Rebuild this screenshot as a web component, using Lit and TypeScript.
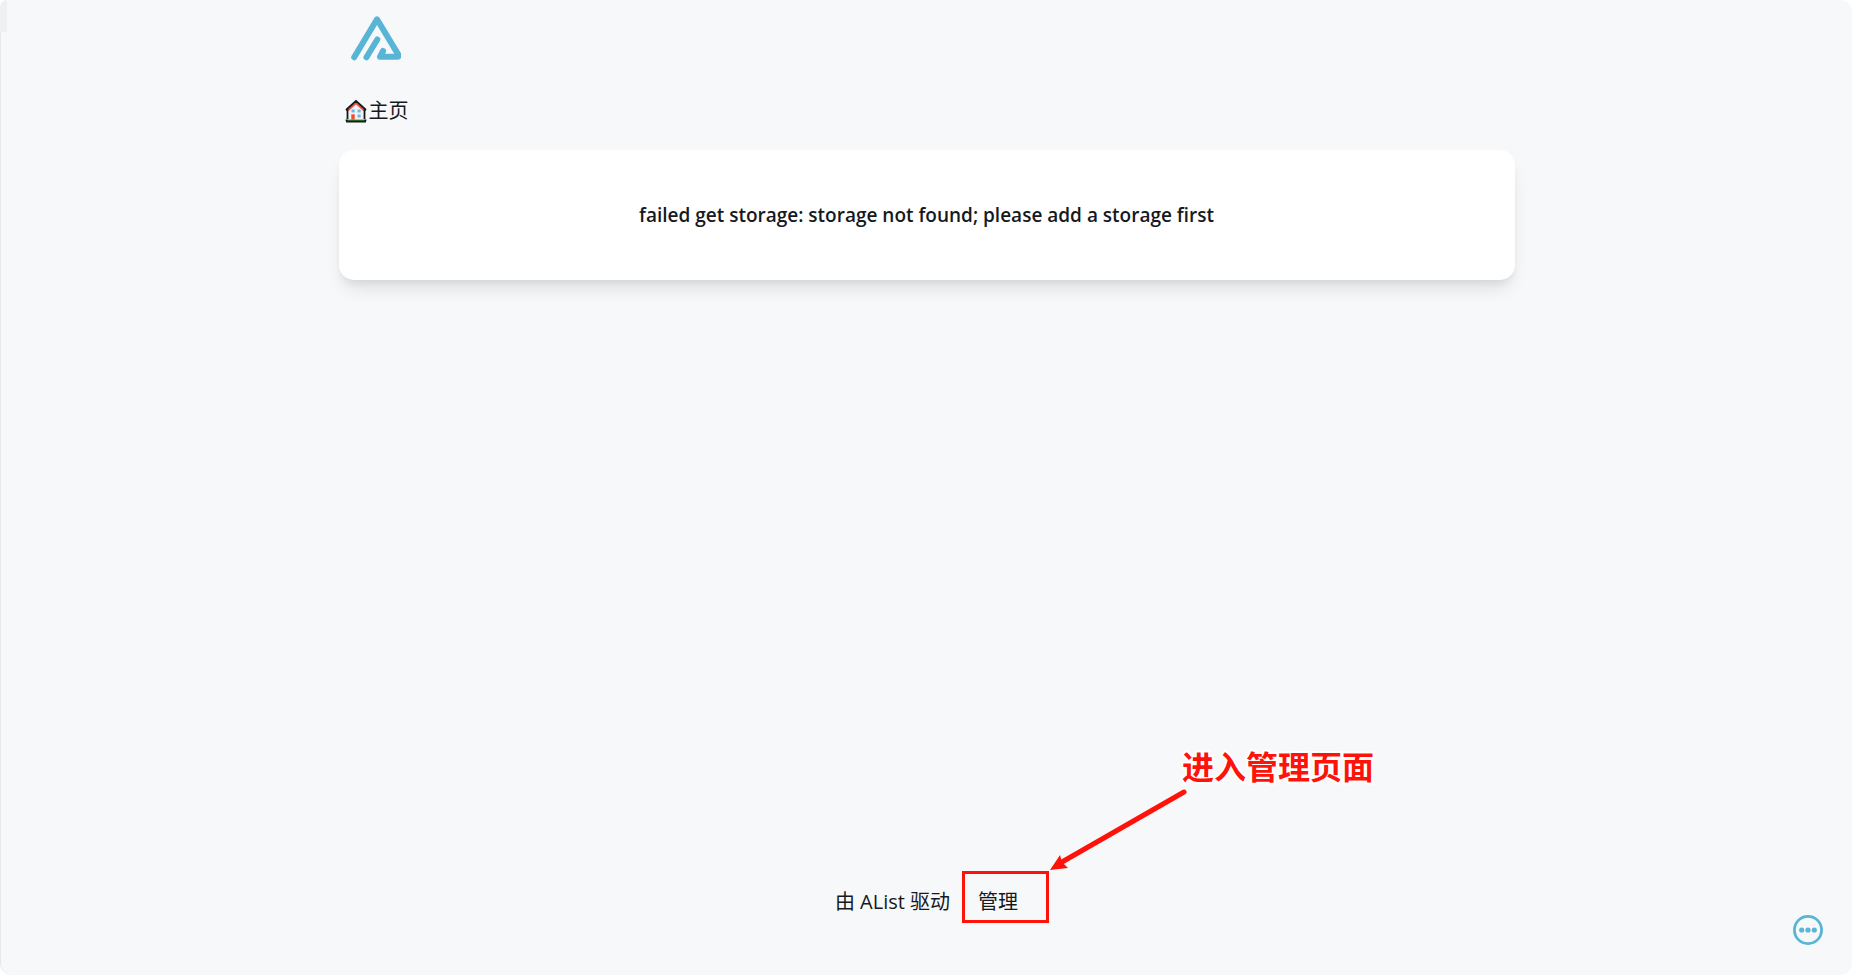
import { LitElement, html, css, svg } from "lit";
import { customElement, property } from "lit/decorators.js";

@customElement("site-logo")
export class SiteLogo extends LitElement {
  static styles = css`
    :host { display: block; }
    .logo { display: block; width: 52px; height: 48px; fill: none; stroke: #59b5d6; stroke-width: 6; stroke-linecap: round; stroke-linejoin: round; }
  `;
  render() {
    return html`<svg class="logo" viewBox="0 0 52 48" role="img" aria-label="AList">
      <path d="M5.200 43.300 L28 5.300 L49.300 40.600 Q50.400 42.800 48 42.800 H31 L34 37" />
      <path d="M17.500 43.300 L28.300 25.500" />
    </svg>`;
  }
}

@customElement("house-icon")
export class HouseIcon extends LitElement {
  static styles = css`
    :host { display: block; }
    .house { display: block; width: 22px; height: 24px; }
  `;
  render() {
    return html`<svg class="house" viewBox="0 0 22 24" aria-hidden="true">
      <path d="M3 10.500 L11 3 L19 10.500 V21.500 H3 Z" fill="#f3f3f6" />
      <path d="M2.800 11.500 L11 4 L19.200 11.500" fill="none" stroke="#f0503c" stroke-width="2" />
      <path d="M1.500 20.500 H20.500 V22 H1.500 Z" fill="#3fae2a" />
      <path d="M2.500 20 V11.500 L1.500 10.500 L11 1.800 L20.500 10.500 L19.500 11.500 V20 M1 22.500 H21 M1.500 20.500 V22 M20.500 20.500 V22" fill="none" stroke="#16181d" stroke-width="1.800" stroke-linejoin="round" />
      <path d="M6.500 10.500h3.200v3h-3.200z M12.500 10.500h3.200v3h-3.200z M12.500 15.500h3.200v3h-3.200z" fill="#69b9e6" />
      <path d="M6.300 15.300h3.400v5.400h-3.400z" fill="#ef4b3a" />
    </svg>`;
  }
}

@customElement("error-card")
export class ErrorCard extends LitElement {
  @property() message = "";
  static styles = css`
    :host { display: block; }
    .card {
      padding: 48px 24px;
      border-radius: 15px;
      background: #fff;
      box-shadow: 0 12px 18px -4px rgba(0, 0, 0, 0.1), 0 5px 7px -2px rgba(0, 0, 0, 0.06);
    }
    .message { margin: 0; font-size: 19px; line-height: 34px; font-weight: 600; text-align: center; }
  `;
  render() {
    return html`<section class="card"><h2 class="message">${this.message}</h2></section>`;
  }
}

@customElement("app-root")
export class AppRoot extends LitElement {
  static styles = css`
    :host {
      display: block;
      background: #fff;
      color: #16191d;
      font-family: "Open Sans", "Noto Sans CJK SC", sans-serif;
      font-size: 20px;
      line-height: 30px;
    }
    .page {
      display: flex;
      flex-direction: column;
      align-items: center;
      box-sizing: border-box;
      min-height: 100vh;
      padding-bottom: 58px;
      border: solid #e6e8ea;
      border-width: 0 0 0 1px;
      border-radius: 12px;
      background: #f7f8fa;
    }
    .column { width: min(98%, 1176px); }
    .header { padding: 14px 10px 0; }
    .logo-link { display: block; width: fit-content; }
    .crumbs { padding: 34px 6px 24px; }
    a { color: inherit; text-decoration: none; }
    .crumb { display: flex; width: fit-content; align-items: center; gap: 2px; }
    .footer { display: flex; align-items: center; margin-top: auto; }
    .powered { padding-right: 14px; }
    .manage { position: relative; padding-left: 14px; }
    .manage::before {
      content: "";
      position: absolute;
      left: 0;
      top: 7px;
      height: 20px;
      border-left: 1px solid #16191d;
    }
    .frame {
      position: absolute;
      left: -2px;
      top: -16px;
      width: 81px;
      height: 46px;
      border: 3px solid #ff120a;
    }
    .arrow { position: absolute; left: 86px; bottom: 45px; width: 142px; height: 86px; }
    .note {
      position: absolute;
      left: 218px;
      bottom: 126px;
      color: #ff120a;
      font-size: 32px;
      line-height: 48px;
      font-weight: 700;
      white-space: nowrap;
      -webkit-text-stroke: 4px #fff;
      paint-order: stroke fill;
    }
    .more {
      position: fixed;
      right: 29px;
      bottom: 30px;
      width: 30px;
      height: 30px;
      padding: 0;
      border: 0;
      background: none;
      color: #59b5d6;
      cursor: pointer;
    }
    .more-icon { display: block; width: 30px; height: 30px; }
    .edge {
      position: absolute;
      left: 0;
      top: 0;
      width: 7px;
      height: 32px;
      border-radius: 12px 0 0 0;
      background: #eff0f2;
    }
  `;

  render() {
    return html`
      <div class="page">
        <div class="edge"></div>
        <header class="column">
          <div class="header">
            <a class="logo-link" href="#"><site-logo></site-logo></a>
          </div>
        </header>
        <main class="column">
          <nav class="crumbs" aria-label="主页">
            <a class="crumb" href="#"><house-icon></house-icon>主页</a>
          </nav>
          <error-card message="failed get storage: storage not found; please add a storage first"></error-card>
        </main>
        <footer class="footer">
          <a class="powered" href="#">由 AList 驱动</a>
          <div class="manage">
            <a href="#">管理</a>
            <div class="frame"></div>
            <svg class="arrow" viewBox="0 0 142 86" aria-hidden="true">
              ${svg`<path d="M134 6 L12 76" stroke="#ff120a" stroke-width="5" stroke-linecap="round" />
              <path d="M0 84 L10 69 L12 76 L18 82 Z" fill="#ff120a" />`}
            </svg>
            <span class="note">进入管理页面</span>
          </div>
        </footer>
        <button class="more" type="button" aria-label="more">
          <svg class="more-icon" viewBox="0 0 30 30" aria-hidden="true">
            <circle cx="15" cy="15" r="13.6" fill="none" stroke="currentColor" stroke-width="2.800" />
            <circle cx="8.700" cy="15" r="2.600" fill="currentColor" />
            <circle cx="15" cy="15" r="2.600" fill="currentColor" />
            <circle cx="21.300" cy="15" r="2.600" fill="currentColor" />
          </svg>
        </button>
      </div>
    `;
  }
}
